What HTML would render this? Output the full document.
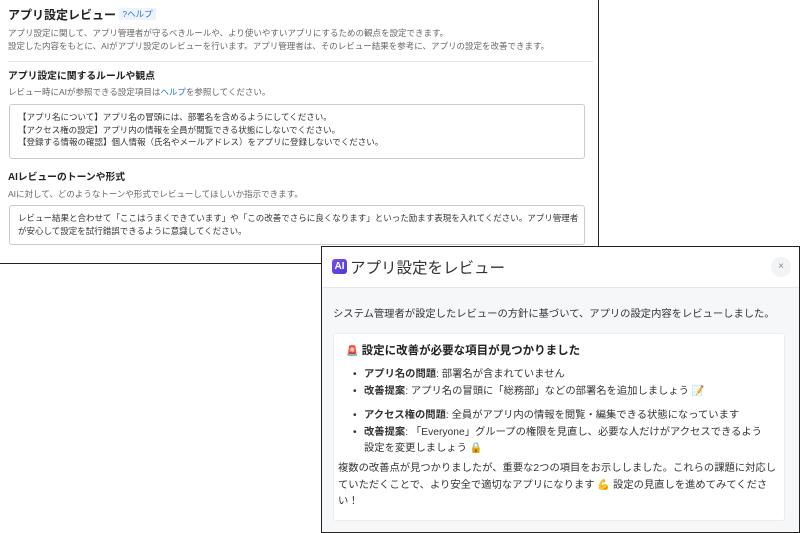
<!DOCTYPE html>
<html><head><meta charset="utf-8"><style>
*{box-sizing:border-box;margin:0;padding:0}
body{width:800px;height:533px;background:#fff;position:relative;overflow:hidden;font-family:"Liberation Sans","Noto Sans CJK JP",sans-serif;color:#333}
.p1{position:absolute;left:0;top:0;width:599px;height:264px;border:1px solid #222;border-top:none;border-left:none;background:#fff}
.a{position:absolute;white-space:nowrap}
.t{font-size:12px;font-weight:bold;color:#222}
.s{font-size:8.5px;color:#666}
.ta{position:absolute;left:9px;width:576px;border:1px solid #ccc;border-radius:3px;background:#fff;font-size:8.5px;color:#333;padding:6px 8px;line-height:12.6px;white-space:nowrap}
.p2{position:absolute;left:321px;top:246px;width:479px;height:287px;border:1.5px solid #222;background:#f6f7f9}
.hd{position:absolute;left:0;top:0;right:0;height:41px;background:#fff;border-bottom:1px solid #e6e6e6}
.card{position:absolute;left:11px;top:86px;width:452px;height:188px;background:#fff;border:1px solid #ececec;border-radius:3px}
.c{font-size:10.3px;color:#333}
.li{position:relative;padding-left:11px}
.li:before{content:"•";position:absolute;left:0;top:0}
</style></head><body>
<div class="p1">
<div class="a t" style="left:8px;top:6px">アプリ設定レビュー <span style="font-size:8.5px;color:#2a6fcf;background:#eef3fa;padding:1px 3px;font-weight:normal;vertical-align:2px">?ヘルプ</span></div>
<div class="a s" style="left:8px;top:27px">アプリ設定に関して、アプリ管理者が守るべきルールや、より使いやすいアプリにするための観点を設定できます。</div>
<div class="a s" style="left:8px;top:40px">設定した内容をもとに、AIがアプリ設定のレビューを行います。アプリ管理者は、そのレビュー結果を参考に、アプリの設定を改善できます。</div>
<div class="a" style="left:8px;top:61px;width:585px;border-top:1px solid #e4e4e4"></div>
<div class="a" style="left:8px;top:68px;font-size:9.8px;font-weight:bold;color:#222">アプリ設定に関するルールや観点</div>
<div class="a s" style="left:8px;top:86px">レビュー時にAIが参照できる設定項目は<span style="color:#2a6fcf">ヘルプ</span>を参照してください。</div>
<div class="ta" style="top:104px;height:55px">【アプリ名について】アプリ名の冒頭には、部署名を含めるようにしてください。<br>【アクセス権の設定】アプリ内の情報を全員が閲覧できる状態にしないでください。<br>【登録する情報の確認】個人情報（氏名やメールアドレス）をアプリに登録しないでください。</div>
<div class="a" style="left:8px;top:169px;font-size:9.8px;font-weight:bold;color:#222">AIレビューのトーンや形式</div>
<div class="a s" style="left:8px;top:188px">AIに対して、どのようなトーンや形式でレビューしてほしいか指示できます。</div>
<div class="ta" style="top:205px;height:40px">レビュー結果と合わせて「ここはうまくできています」や「この改善でさらに良くなります」といった励ます表現を入れてください。アプリ管理者<br>が安心して設定を試行錯誤できるように意識してください。</div>
</div>
<div class="p2">
<div class="hd">
<div class="a" style="left:10px;top:12px;width:15px;height:15px;border-radius:3px;background:linear-gradient(135deg,#7b4de8,#4a3bd6);color:#fff;font-size:10px;font-weight:bold;text-align:center;line-height:15px">AI</div>
<div class="a" style="left:28px;top:9px;font-size:15.5px;color:#333">アプリ設定をレビュー</div>
<div class="a" style="left:449px;top:10px;width:20px;height:20px;border-radius:50%;background:#f2f3f5;color:#888;font-size:10px;text-align:center;line-height:20px">×</div>
</div>
<div class="a c" style="left:11px;top:58px">システム管理者が設定したレビューの方針に基づいて、アプリの設定内容をレビューしました。</div>
<div class="card">
<div class="a" style="left:12px;top:8px;font-size:11.5px;font-weight:bold;color:#222"><span style="color:#e33;font-size:10px">🚨</span> 設定に改善が必要な項目が見つかりました</div>
<div class="a c" style="left:19px;top:33px;line-height:16.5px">
<div class="li"><b>アプリ名の問題</b>: 部署名が含まれていません</div>
<div class="li"><b>改善提案</b>: アプリ名の冒頭に「総務部」などの部署名を追加しましょう <span style="color:#d55">📝</span></div></div>
<div class="a c" style="left:19px;top:74px;line-height:16.5px">
<div class="li"><b>アクセス権の問題</b>: 全員がアプリ内の情報を閲覧・編集できる状態になっています</div>
<div class="li"><b>改善提案</b>: 「Everyone」グループの権限を見直し、必要な人だけがアクセスできるよう<br>設定を変更しましょう <span style="color:#e90">🔒</span></div></div>
<div class="a c" style="left:4px;top:127px;line-height:16.5px">複数の改善点が見つかりましたが、重要な2つの項目をお示ししました。これらの課題に対応し<br>ていただくことで、より安全で適切なアプリになります <span style="color:#e90">💪</span> 設定の見直しを進めてみてくださ<br>い！</div>
</div>
</div>
</body></html>
